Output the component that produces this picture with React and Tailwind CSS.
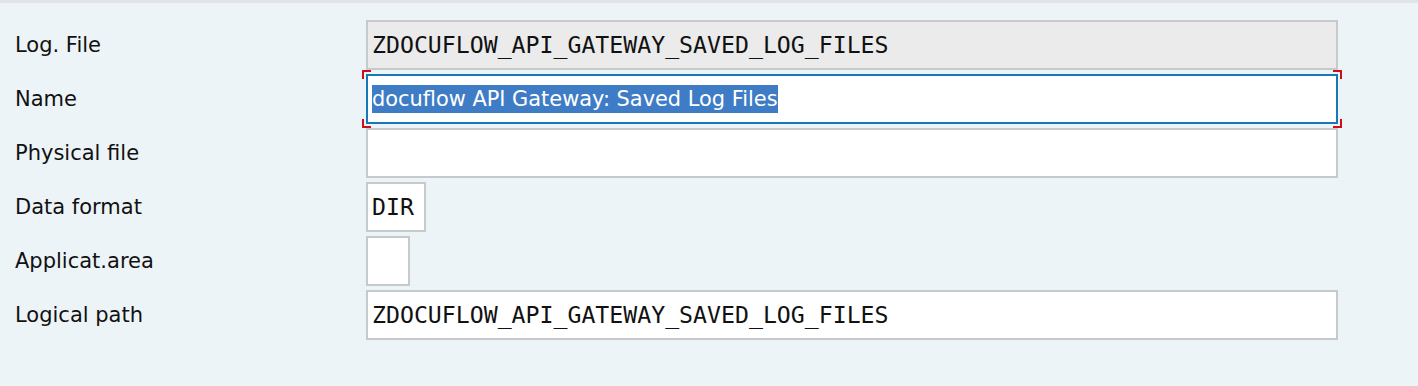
import React from 'react'

// SAP-style logical file definition form
const MONO = { fontFamily: '"DejaVu Sans Mono", "Liberation Mono", monospace' }

function Label({ children }) {
  return (
    <div className="w-[366px] shrink-0 pl-[15px] pt-[2px] text-[21px] text-[#111]">{children}</div>
  )
}

function Field({ value, width = 'w-[972px]', bg = 'bg-white' }) {
  return (
    <div
      className={`${width} h-[50px] ${bg} border-2 border-[#c7cacc] flex items-center pl-[4px] text-[23.2px] text-[#111]`}
      style={MONO}
    >
      {value}
    </div>
  )
}

function Corner({ pos }) {
  const cls = {
    tl: 'top-[-4px] left-[-4px] border-t-2 border-l-2',
    bl: 'bottom-[-4px] left-[-4px] border-b-2 border-l-2',
    tr: 'top-[-4px] right-[-4px] border-t-2 border-r-2',
    br: 'bottom-[-4px] right-[-4px] border-b-2 border-r-2',
  }[pos]
  return <span className={`absolute w-[9px] h-[9px] border-[#cf0f17] ${cls}`} />
}

export default function App() {
  return (
    <div
      className="w-[1418px] h-[386px] bg-[#edf4f8] border-t-[3px] border-[#e2e4e7] pt-[17px]"
      style={{ fontFamily: '"DejaVu Sans", "Noto Sans", sans-serif' }}
    >
      <div className="flex flex-col gap-[4px]">
        <div className="flex items-center">
          <Label>Log. File</Label>
          <Field value="ZDOCUFLOW_API_GATEWAY_SAVED_LOG_FILES" bg="bg-[#ebebeb]" />
        </div>

        <div className="flex items-center">
          <Label>Name</Label>
          <div className="relative w-[972px] h-[50px]">
            <div className="h-full bg-white border-2 border-[#1777b7] flex items-center pl-[4px] text-[20.9px]">
              <span className="bg-[#3f7cc6] text-white leading-[28px]">
                docuflow API Gateway: Saved Log Files
              </span>
            </div>
            <Corner pos="tl" />
            <Corner pos="bl" />
            <Corner pos="tr" />
            <Corner pos="br" />
          </div>
        </div>

        <div className="flex items-center">
          <Label>Physical file</Label>
          <Field value="" />
        </div>

        <div className="flex items-center">
          <Label>Data format</Label>
          <Field value="DIR" width="w-[60px]" />
        </div>

        <div className="flex items-center">
          <Label>Applicat.area</Label>
          <Field value="" width="w-[44px]" />
        </div>

        <div className="flex items-center">
          <Label>Logical path</Label>
          <Field value="ZDOCUFLOW_API_GATEWAY_SAVED_LOG_FILES" />
        </div>
      </div>
    </div>
  )
}
